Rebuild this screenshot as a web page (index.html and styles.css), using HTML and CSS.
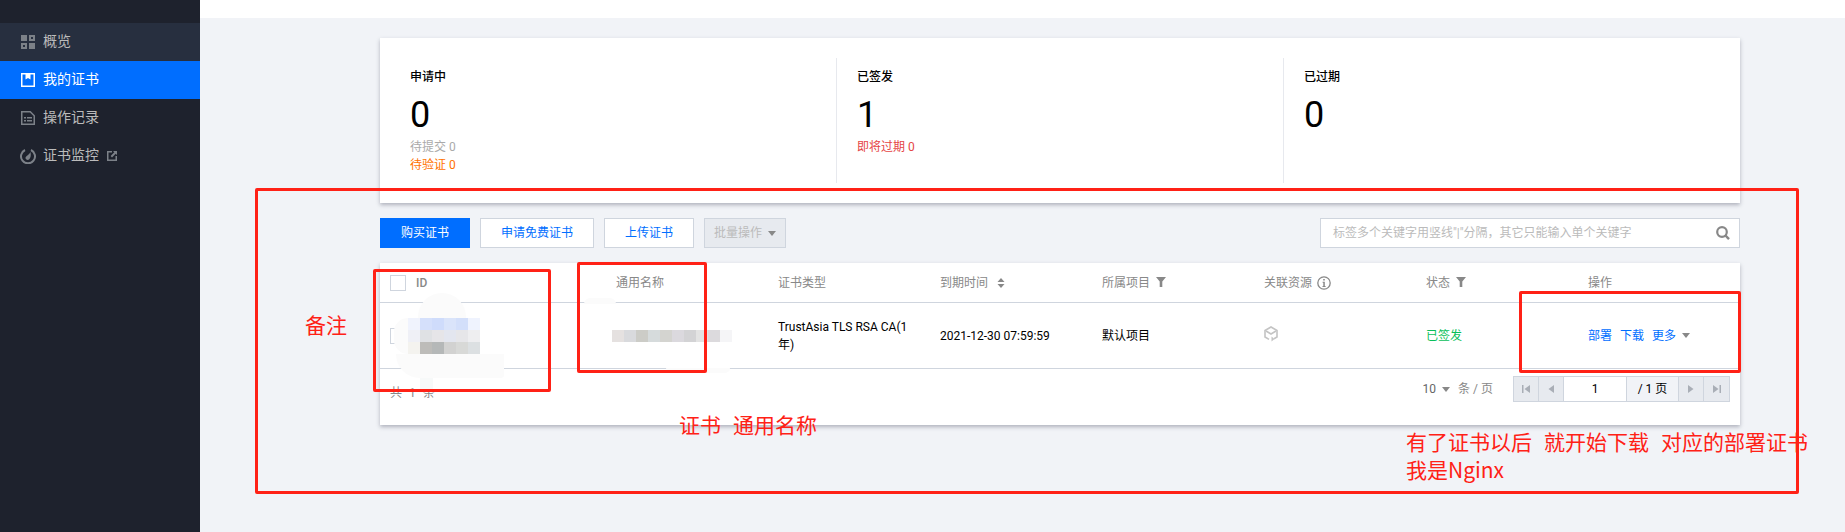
FILE: index.html
```html
<!DOCTYPE html>
<html lang="zh-CN">
<head>
<meta charset="utf-8">
<title>证书</title>
<link rel="stylesheet" href="styles.css">
</head>
<body>
<div class="app">
  <aside class="sidebar">
    <div class="brand"><span>证书</span></div>
    <nav class="nav">
      <a class="nav-item hover">
        <svg class="nav-icon" viewBox="0 0 14 14"><path fill="#7c8188" fill-rule="evenodd" d="M0 0h6v6H0zM8 0h6v6H8zM10 2v2h2V2zM0 8h6v6H0zM2 10v2h2v-2zM8 8h6v6H8z"/></svg>
        <span>概览</span>
      </a>
      <a class="nav-item active">
        <svg class="nav-icon" viewBox="0 0 14 14"><path fill="#fff" fill-rule="evenodd" d="M0 0h14v14H0zM1.500 1.500v11h11v-11z"/><path fill="#fff" d="M4.500 1h5v5.500L7 5 4.500 6.500z"/></svg>
        <span>我的证书</span>
      </a>
      <a class="nav-item">
        <svg class="nav-icon" viewBox="0 0 14 14"><path fill="none" stroke="#7c8188" stroke-width="1.500" d="M.75.75h8.500l4 4v8.500H.75z"/><path fill="#7c8188" d="M3 6h2v1.500H3zM6 6h5v1.500H6zM3 9h2v1.500H3zM6 9h5v1.500H6z"/></svg>
        <span>操作记录</span>
      </a>
      <a class="nav-item">
        <svg class="nav-icon gauge" viewBox="0 0 16 16"><path fill="none" stroke="#7c8188" stroke-width="2" d="M5 2a7 7 0 1 0 6 0"/><path fill="#7c8188" d="M10.500 4c.6 3 .4 6-1.500 7.500-1.500 1-3.500 0-3.500-1.500 0-2 3.500-3 5-6z"/></svg>
        <span>证书监控</span>
        <svg class="ext-icon" viewBox="0 0 10 10"><path fill="#7c8188" d="M0 0h5v1.500H1.500v7h7V5H10v5H0z"/><path fill="#7c8188" d="M6 0h4v4L8.700 2.700 5 6.400 3.600 5l3.700-3.700z"/></svg>
      </a>
    </nav>
  </aside>

  <main class="main">
    <div class="topbar"></div>
    <div class="content">
      <section class="card stats">
        <div class="stat">
          <div class="stat-title">申请中</div>
          <div class="stat-num">0</div>
          <div class="stat-sub muted">待提交 0</div>
          <div class="stat-sub orange">待验证 0</div>
        </div>
        <div class="stat">
          <div class="stat-title">已签发</div>
          <div class="stat-num">1</div>
          <div class="stat-sub red">即将过期 0</div>
        </div>
        <div class="stat last">
          <div class="stat-title">已过期</div>
          <div class="stat-num">0</div>
        </div>
      </section>

      <section class="toolbar">
        <button class="btn primary">购买证书</button>
        <button class="btn wide">申请免费证书</button>
        <button class="btn">上传证书</button>
        <button class="btn disabled">批量操作<i class="caret"></i></button>
        <div class="search">
          <span class="placeholder">标签多个关键字用竖线"|"分隔，其它只能输入单个关键字</span>
          <svg class="search-icon" viewBox="0 0 14 14"><circle cx="6" cy="6" r="4.800" fill="none" stroke="#888" stroke-width="2.200"/><path stroke="#888" stroke-width="2.400" d="M9 9l4 4.200"/></svg>
        </div>
      </section>

      <section class="card table">
        <div class="row head">
          <div class="cell first"><span class="check"></span><b class="id">ID</b></div>
          <div class="cell">通用名称</div>
          <div class="cell">证书类型</div>
          <div class="cell">到期时间
            <svg class="sort" viewBox="0 0 8 10"><path fill="#888" d="M4 0l3.500 4h-7zM4 10L.5 6h7z"/></svg>
          </div>
          <div class="cell">所属项目
            <svg class="filter" viewBox="0 0 10 10"><path fill="#888" d="M0 0h10L6.300 4.500V10H3.700V4.500z"/></svg>
          </div>
          <div class="cell">关联资源
            <svg class="info" viewBox="0 0 14 14"><circle cx="7" cy="7" r="6.200" fill="none" stroke="#888" stroke-width="1.300"/><path fill="#888" d="M6.200 3h1.600v1.600H6.200zM5.600 5.800h2.200V10h.8v1H5.500v-1h.8V6.800h-.7z"/></svg>
          </div>
          <div class="cell">状态
            <svg class="filter" viewBox="0 0 10 10"><path fill="#888" d="M0 0h10L6.300 4.500V10H3.700V4.500z"/></svg>
          </div>
          <div class="cell">操作</div>
        </div>
        <div class="row body">
          <div class="cell first"><span class="check"></span></div>
          <div class="cell"></div>
          <div class="cell type">TrustAsia TLS RSA CA(1<br>年)</div>
          <div class="cell">2021-12-30 07:59:59</div>
          <div class="cell">默认项目</div>
          <div class="cell">
            <svg class="hex" viewBox="0 0 14 16"><path fill="none" stroke="#c4c4c4" stroke-width="1.600" d="M5 13.400L1 11V4.500L7 1l6 3.500V11l-3 1.800"/><path fill="none" stroke="#c4c4c4" stroke-width="1.600" d="M2 5l5 3 5-3"/><path fill="#c4c4c4" d="M7.500 10.500l3 2.500-3 2.500z"/></svg>
          </div>
          <div class="cell ok">已签发</div>
          <div class="cell ops"><a>部署</a><a>下载</a><a>更多</a><i class="caret"></i></div>
        </div>
        <div class="foot">
          <span class="total">共 1 条</span>
          <div class="pagesize"><span class="size">10</span><i class="caret"></i><span class="perpage">条 / 页</span></div>
          <div class="pager">
            <span class="pg"><svg viewBox="0 0 10 10"><path fill="#a9aeb6" d="M1 1h1.500v8H1zM9 1v8L3.500 5z"/></svg></span>
            <span class="pg"><svg viewBox="0 0 10 10"><path fill="#a9aeb6" d="M8 1v8L2.500 5z"/></svg></span>
            <span class="pg-input">1</span>
            <span class="pg-total">/ 1 页</span>
            <span class="pg"><svg viewBox="0 0 10 10"><path fill="#a9aeb6" d="M2 1v8l5.500-4z"/></svg></span>
            <span class="pg"><svg viewBox="0 0 10 10"><path fill="#a9aeb6" d="M7.500 1H9v8H7.500zM1 1v8l5.500-4z"/></svg></span>
          </div>
        </div>
      </section>
    </div>
  </main>
</div>

<div class="mosaic mosaic-id">
  <i class="c1"></i><i class="c2"></i><i class="c3"></i><i class="c4"></i><i class="c5"></i><i class="c6"></i>
  <i class="c7"></i><i class="c8"></i><i class="c9"></i><i class="c10"></i><i class="c11"></i><i class="c12"></i>
  <i class="c13"></i><i class="c14"></i><i class="c15"></i><i class="c16"></i><i class="c17"></i><i class="c18"></i>
</div>
<div class="mosaic mosaic-name">
  <i class="n1"></i><i class="n2"></i><i class="n3"></i><i class="n4"></i><i class="n5"></i><i class="n6"></i><i class="n7"></i><i class="n8"></i><i class="n9"></i><i class="n10"></i>
</div>
<div class="smear s1"></div>
<div class="smear s2"></div>
<div class="smear s3"></div>
<div class="smear s4"></div>
<div class="smear s5"></div>
<div class="smear s6"></div>

<div class="mark mark-all"></div>
<div class="mark mark-id"></div>
<div class="mark mark-name"></div>
<div class="mark mark-ops"></div>
<div class="note note-1">备注</div>
<div class="note note-2">证书&nbsp;&nbsp;通用名称</div>
<div class="note note-3">有了证书以后&nbsp;&nbsp;就开始下载&nbsp;&nbsp;对应的部署证书<br>我是Nginx</div>
</body>
</html>
```
FILE: styles.css
```css
* { box-sizing: border-box; }
html, body { margin: 0; padding: 0; }
body {
  position: relative;
  width: 1845px;
  height: 532px;
  overflow: hidden;
  background: #f1f3f7;
  font: 12px/18px Roboto, "Noto Sans CJK SC", sans-serif;
  color: #000;
}
.app { display: flex; height: 532px; }

/* sidebar */
.sidebar { width: 200px; flex: none; background: #1e222d; }
.brand { height: 23px; overflow: hidden; padding-left: 52px; }
.brand span { display: block; margin-top: -16px; font-size: 16px; line-height: 18px; font-weight: 700; color: #fff; }
.nav-item { display: flex; align-items: center; height: 38px; padding-left: 21px; font-size: 14px; color: #bbb; }
.nav-item span { margin-top: -2px; }
.nav-item.hover { background: #272f3f; }
.nav-item.active { background: #006eff; color: #fff; }
.nav-icon { width: 14px; height: 14px; margin-right: 8px; flex: none; }
.nav-icon.gauge { width: 16px; height: 16px; margin-left: -1px; margin-right: 7px; }
.ext-icon { width: 10px; height: 10px; margin-left: 8px; margin-top: -1px; }

/* main */
.main { flex: 1; min-width: 0; }
.topbar { height: 18px; background: #fff; }
.content { padding: 20px 105px 0 180px; }
.card { background: #fff; box-shadow: 0 2px 4px rgba(54, 58, 80, .35); }

/* stats */
.stats { display: grid; grid-template-columns: repeat(3, 447px); height: 165px; padding: 20px 0 20px 10px; }
.stat { padding: 10px 0 0 20px; border-right: 1px solid #e7e9ee; }
.stat.last { border-right: 0; }
.stat-title { font-weight: 500; line-height: 18px; }
.stat-num { margin-top: 8px; font-size: 36px; line-height: 42px; }
.stat-sub { line-height: 18px; }
.stat-num + .stat-sub { margin-top: 2px; }
.muted { color: #aaa; }
.orange { color: #ff7200; }
.red { color: #e54545; }

/* toolbar */
.toolbar { display: flex; align-items: flex-start; gap: 10px; margin-top: 15px; height: 30px; }
.btn { width: 90px; height: 30px; padding: 0; border: 1px solid #cfd5de; background: #fff; color: #006eff; font: inherit; text-align: center; }
.btn.wide { width: 114px; }
.btn.primary { background: #006eff; border-color: #006eff; color: #fff; }
.btn.disabled { width: 82px; background: #e7eaef; color: #bbb; }
.caret { display: inline-block; width: 0; height: 0; border: 4px solid transparent; border-top: 5px solid #888; border-bottom: 0; vertical-align: middle; }
.btn .caret { margin-left: 6px; }
.search { display: flex; align-items: center; justify-content: space-between; width: 420px; height: 30px; margin-left: auto; padding: 0 9px 0 12px; border: 1px solid #cfd5de; background: #fff; }
.placeholder { color: #bbb; }
.search-icon { width: 14px; height: 14px; }

/* table */
.table { margin-top: 15px; height: 162px; }
.row { display: grid; grid-template-columns: 226px repeat(7, 162px); border-bottom: 1px solid #cfd5de; }
.row.head { height: 40px; color: #888; }
.row.body { height: 66px; }
.cell { display: flex; align-items: center; padding-left: 10px; padding-right: 10px; white-space: nowrap; }
.cell.first { padding-left: 10px; }
.cell svg { flex: none; }
.check { width: 16px; height: 16px; border: 1px solid #cfd5de; background: #fff; margin-right: 10px; flex: none; }
.id { font-weight: 500; color: #888; }
.sort { width: 8px; height: 10px; margin-left: 9px; }
.filter { width: 10px; height: 10px; margin-left: 6px; margin-top: -2px; }
.info { width: 14px; height: 14px; margin-left: 5px; }
.hex { width: 14px; height: 16px; margin-top: -4px; }
.type { display: block; align-self: center; }
.ok { color: #0abf5b; }
.ops a { color: #006eff; margin-right: 8px; }
.ops .caret { margin-left: -2px; }

/* footer */
.foot { display: flex; align-items: center; height: 56px; padding: 0 10px 16px; }
.total { margin-top: 8px; color: #888; word-spacing: 4px; }
.pagesize { display: flex; align-items: center; margin-left: auto; margin-right: 20px; color: #888; }
.size { color: #666; }
.pagesize .caret { margin: 0 8px 0 6px; }
.pager { display: flex; height: 26px; border: 1px solid #cfd5de; }
.pg { display: flex; align-items: center; justify-content: center; width: 25px; background: #e7eaef; border-right: 1px solid #cfd5de; }
.pg:last-child { border-right: 0; }
.pg svg { width: 10px; height: 10px; }
.pg-input { width: 63px; background: #fff; text-align: center; line-height: 24px; border-right: 1px solid #cfd5de; }
.pg-total { width: 52px; background: #f1f3f7; text-align: center; line-height: 24px; border-right: 1px solid #cfd5de; }

/* pixelated privacy cover */
.mosaic { position: absolute; display: grid; grid-auto-rows: 12px; }
.mosaic i { display: block; }
.mosaic-id { left: 408px; top: 318px; grid-template-columns: repeat(6, 12px); }
.mosaic-name { left: 612px; top: 330px; grid-template-columns: repeat(10, 12px); }
.c1 { background: #f0f3fd; } .c2 { background: #d5e0fb; } .c3 { background: #cfdcfb; } .c4 { background: #dae4fa; } .c5 { background: #d3dffa; } .c6 { background: #eff3fe; }
.c7 { background: #eff0f6; } .c8 { background: #dfe1e4; } .c9 { background: #e6e5e8; } .c10 { background: #e3e6ef; } .c11 { background: #e6e6e9; } .c12 { background: #eeeef0; }
.c13 { background: #f4f3ef; } .c14 { background: #bdbcb9; } .c15 { background: #b5b8b8; } .c16 { background: #d2d2d1; } .c17 { background: #d8d9d7; } .c18 { background: #dce0e2; }
.n1 { background: #e5e1e0; } .n2 { background: #d9dadd; } .n3 { background: #ccccc7; } .n4 { background: #d6dbdc; } .n5 { background: #d4d4d0; } .n6 { background: #dbd9de; } .n7 { background: #d3d3d5; } .n8 { background: #e3e3e3; } .n9 { background: #dcdadd; } .n10 { background: #f5f5f7; }

.smear { position: absolute; background: #fbfbfb; }
.s1 { left: 418px; top: 293px; width: 48px; height: 25px; border-radius: 24px 24px 0 0; }
.s2 { left: 394px; top: 318px; width: 14px; height: 36px; border-radius: 14px 0 0 14px; }
.s3 { left: 396px; top: 354px; width: 108px; height: 24px; border-radius: 0 0 4px 30px; }
.s4 { left: 420px; top: 378px; width: 13px; height: 12px; background: #f7f9f9; }
.s5 { left: 584px; top: 298px; width: 32px; height: 6px; border-radius: 16px 16px 0 0; }
.s6 { left: 666px; top: 368px; width: 64px; height: 5px; border-radius: 0 0 30px 30px; }

/* red annotations */
.mark { position: absolute; border: 3px solid #ff2116; border-radius: 2px; }
.mark-all { left: 255px; top: 188px; width: 1544px; height: 306px; }
.mark-id { left: 373px; top: 269px; width: 178px; height: 123px; }
.mark-name { left: 577px; top: 262px; width: 130px; height: 111px; }
.mark-ops { left: 1519px; top: 291px; width: 222px; height: 82px; }
.note { position: absolute; font: 21px/28px "Noto Sans CJK SC", sans-serif; color: #ff2116; white-space: nowrap; word-spacing: 1.3px; }
.note-1 { left: 305px; top: 310px; }
.note-2 { left: 679px; top: 410px; }
.note-3 { left: 1406px; top: 427px; }
```
